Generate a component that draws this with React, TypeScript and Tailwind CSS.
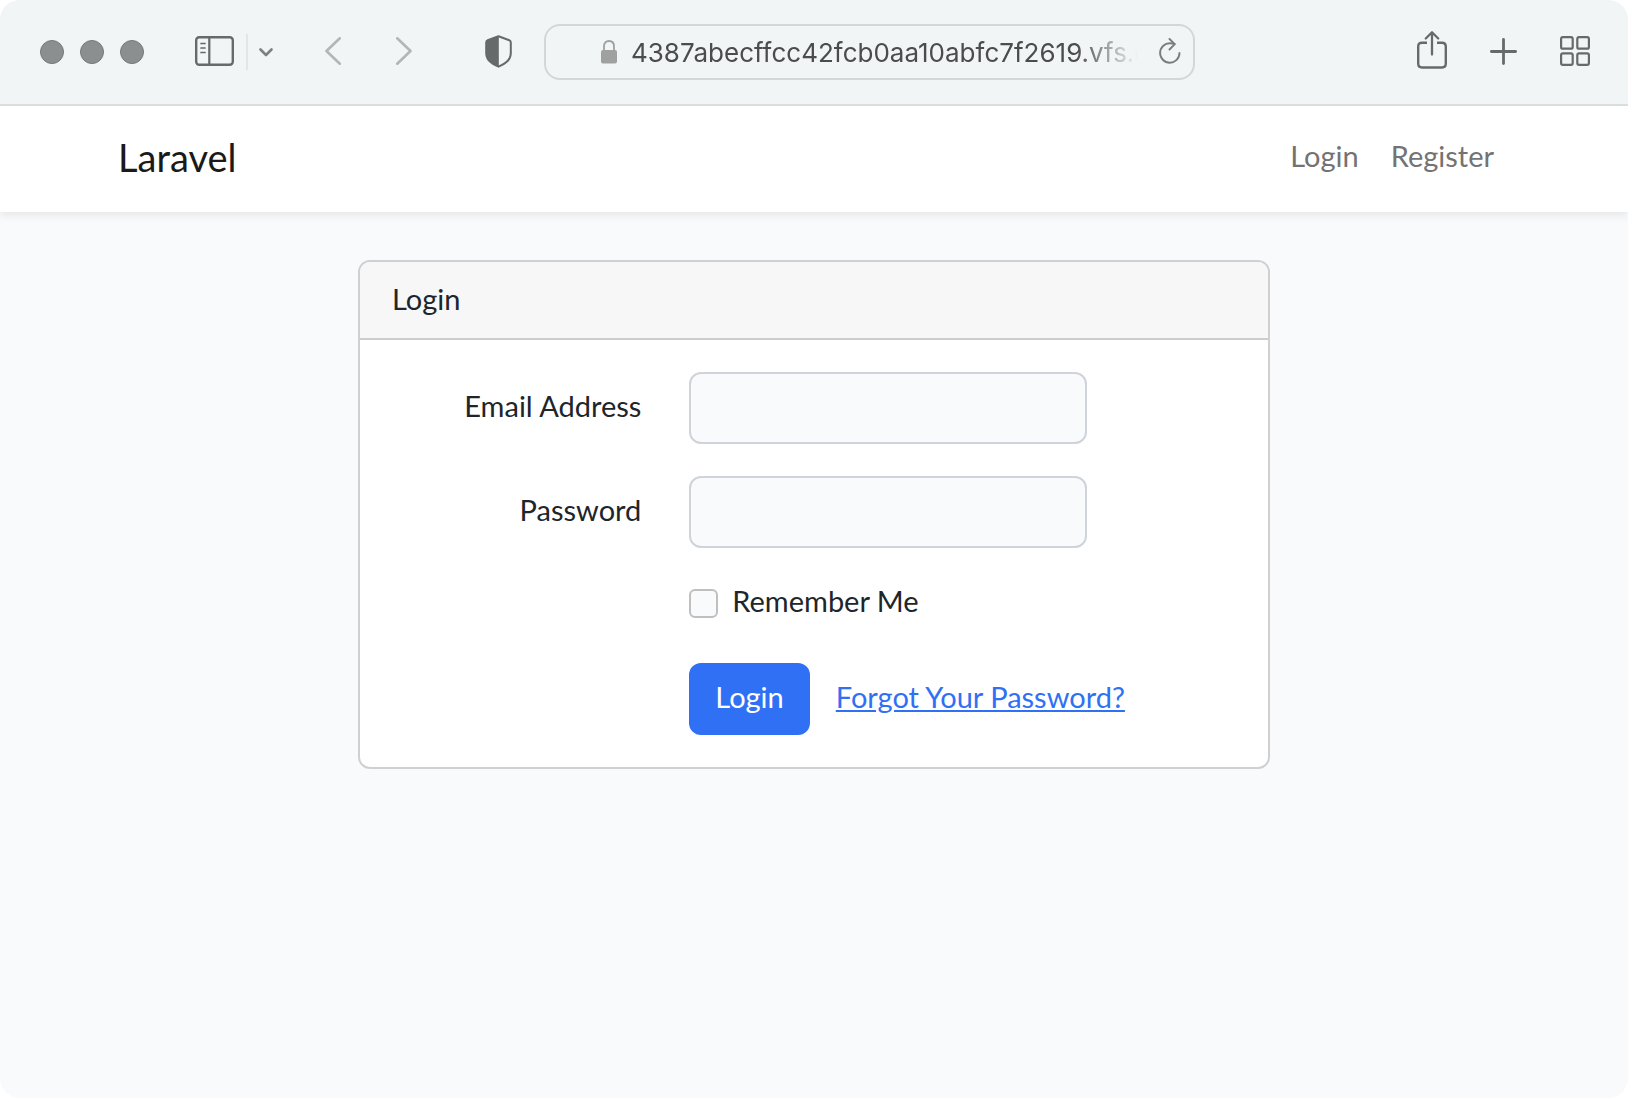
import React, { useState } from 'react';

function WindowDots() {
  return (
    <div className="flex shrink-0 gap-4">
      <span className="size-6 rounded-full border border-[#757979] bg-[#8b8f8f]" />
      <span className="size-6 rounded-full border border-[#757979] bg-[#8b8f8f]" />
      <span className="size-6 rounded-full border border-[#757979] bg-[#8b8f8f]" />
    </div>
  );
}

function AddressBar() {
  return (
    <div className="ml-8 flex h-14 w-[42%] items-center rounded-2xl border-2 border-[#d3d7d7] pl-[55px] pr-3">
      <svg width="16" height="24" viewBox="0 0 16 24" className="shrink-0" aria-hidden="true">
        <path d="M3 11V6.500C3 3 5 1 8 1s5 2 5 5.500V11" fill="none" stroke="#9fa1a1" strokeWidth="1.800" />
        <rect x="0" y="10" width="16" height="13.500" rx="2" fill="#9fa1a1" />
      </svg>
      <input
        type="text"
        aria-label="Address"
        defaultValue="4387abecffcc42fcb0aa10abfc7f2619.vfs.cloud"
        className="ml-[14px] min-w-0 flex-1 bg-transparent pt-[2px] font-['Inter',sans-serif] text-[26px] text-[#4c4c4c] outline-none [mask-image:linear-gradient(to_right,black_87%,transparent_99%)]"
      />
      <button type="button" aria-label="Reload" className="ml-4 shrink-0 pb-[2px]">
        <svg width="22" height="26" viewBox="0 0 22 26" fill="none" stroke="#7b7d7d" strokeWidth="1.900" strokeLinecap="round" strokeLinejoin="round">
          <path d="M20.500 15A9.700 9.700 0 1 1 11 5.300c1.700 0 3.200.2 4.500.8" />
          <path d="M10.500 1l5.300 5.100-5.300 5.400" />
        </svg>
      </button>
    </div>
  );
}

function Toolbar() {
  return (
    <header className="flex h-[106px] items-center border-b-2 border-[#dcdfdf] bg-[#f1f5f6] pl-10 pr-[38px]">
      <WindowDots />

      <button type="button" aria-label="Show sidebar" className="ml-[51px] shrink-0 pb-[2px]">
        <svg width="39" height="30" viewBox="0 0 39 30" fill="none" stroke="#666a6b" strokeLinecap="round">
          <rect x="1.200" y="1.200" width="36.600" height="27.600" rx="3" strokeWidth="2.400" />
          <path d="M14.300 1v28" strokeWidth="2.200" />
          <path d="M6 7.500h4M6 12h4M6 16.500h4" strokeWidth="1.700" />
        </svg>
      </button>
      <span className="ml-3 h-9 w-[2px] shrink-0 bg-[#e2e6e7]" />
      <button type="button" aria-label="Tab groups" className="ml-[11px] shrink-0">
        <svg width="14" height="9" viewBox="0 0 14 9" fill="none" stroke="#7c8081" strokeWidth="2.600" strokeLinecap="round" strokeLinejoin="round">
          <path d="M1.500 1.500L7 7l5.500-5.500" />
        </svg>
      </button>

      <button type="button" aria-label="Back" className="ml-[52px] shrink-0 pb-[2px]">
        <svg width="16" height="28" viewBox="0 0 16 28" fill="none" stroke="#b2b6b7" strokeWidth="2.600" strokeLinecap="round" strokeLinejoin="round">
          <path d="M14.800 1.300L1.500 14l13.300 12.700" />
        </svg>
      </button>
      <button type="button" aria-label="Forward" className="ml-[55px] shrink-0 pb-[2px]">
        <svg width="16" height="28" viewBox="0 0 16 28" fill="none" stroke="#b2b6b7" strokeWidth="2.600" strokeLinecap="round" strokeLinejoin="round">
          <path d="M1.200 1.300L14.500 14L1.200 26.700" />
        </svg>
      </button>

      <button type="button" aria-label="Privacy report" className="ml-[73px] shrink-0 pb-[2px]">
        <svg width="27" height="33" viewBox="0 0 27 33">
          <path
            d="M13.500 1.200L24.300 5.200q1.500.6 1.500 2.300V18c0 6-3.300 9.500-12.300 13.700C4.500 27.500 1.200 24 1.200 18V7.500q0-1.700 1.500-2.300z"
            fill="none"
            stroke="#666a6b"
            strokeWidth="2"
            strokeLinejoin="round"
          />
          <path d="M13.800 1L2.700 5.200Q1.200 5.800 1.200 7.500V18c0 6 3.300 9.500 12.600 13.700z" fill="#666a6b" />
        </svg>
      </button>

      <AddressBar />

      <div className="ml-auto flex shrink-0 items-center gap-[43px] pb-[2px]">
        <button type="button" aria-label="Share" className="pb-[2px]">
          <svg width="30" height="38" viewBox="0 0 30 38" fill="none" stroke="#666a6b" strokeWidth="2.400" strokeLinecap="round" strokeLinejoin="round">
            <path d="M10 11.700H5Q1.200 11.700 1.200 15.500V32.500Q1.200 36.500 5 36.500H25Q28.800 36.500 28.800 32.500V15.500Q28.800 11.700 25 11.700H20" strokeLinecap="butt" />
            <path d="M15 23.500V1.500M8.800 7.500L15 1.300l6.200 6.200" strokeWidth="2.300" />
          </svg>
        </button>
        <button type="button" aria-label="New tab">
          <svg width="27" height="27" viewBox="0 0 27 27" fill="none" stroke="#666a6b" strokeWidth="2.800" strokeLinecap="round">
            <path d="M13.500 1.400v24.200M1.400 13.500h24.200" />
          </svg>
        </button>
        <button type="button" aria-label="Tab overview">
          <svg width="30" height="30" viewBox="0 0 30 30" fill="none" stroke="#666a6b" strokeWidth="2.200">
            <rect x="1.100" y="1.100" width="11.600" height="11.600" rx="1.800" />
            <rect x="17.300" y="1.100" width="11.600" height="11.600" rx="1.800" />
            <rect x="1.100" y="17.300" width="11.600" height="11.600" rx="1.800" />
            <rect x="17.300" y="17.300" width="11.600" height="11.600" rx="1.800" />
          </svg>
        </button>
      </div>
    </header>
  );
}

function Navbar() {
  return (
    <nav className="bg-white shadow-[0_4px_8px_rgba(0,0,0,0.075)]">
      <div className="mx-auto flex h-[106px] max-w-[1440px] items-center justify-between px-6 pb-1">
        <a href="#" className="text-[38px] text-[#1a1a1a]">Laravel</a>
        <div className="flex gap-8 pb-[2px] pr-4">
          <a href="#login" className="text-[#737373]">Login</a>
          <a href="#register" className="text-[#737373]">Register</a>
        </div>
      </div>
    </nav>
  );
}

function LoginCard() {
  const [remember, setRemember] = useState(false);

  return (
    <section className="overflow-hidden rounded-xl border-2 border-[#cfd0d2] bg-white">
      <h1 className="border-b-2 border-[#cccccc] bg-[#f7f7f7] px-8 pb-4 pt-[14px]">Login</h1>

      <form className="p-8" onSubmit={(e) => e.preventDefault()}>
        <div className="grid grid-cols-12 gap-x-12">
          <label htmlFor="email" className="col-span-4 pt-[11px] text-right">Email Address</label>
          <input id="email" type="email" className="col-span-6 h-[72px] rounded-xl border-2 border-[#ced4da] bg-[#f8fafc] px-6" />
        </div>

        <div className="mt-8 grid grid-cols-12 gap-x-12">
          <label htmlFor="password" className="col-span-4 pt-[11px] text-right">Password</label>
          <input id="password" type="password" className="col-span-6 h-[72px] rounded-xl border-2 border-[#ced4da] bg-[#f8fafc] px-6" />
        </div>

        <div className="mt-[30px] grid grid-cols-12 gap-x-12">
          <div className="col-span-6 col-start-5 flex gap-[14px]">
            <input
              id="remember"
              type="checkbox"
              checked={remember}
              onChange={(e) => setRemember(e.target.checked)}
              className="mt-[11px] size-[29px] shrink-0 appearance-none rounded-md border-2 border-[#bfbfbf] bg-[#f8fafc] checked:border-[#3070f5] checked:bg-[#3070f5]"
            />
            <label htmlFor="remember">Remember Me</label>
          </div>
        </div>

        <div className="mt-[39px] grid grid-cols-12 gap-x-12">
          <div className="col-span-8 col-start-5 flex items-center">
            <button type="submit" className="h-[72px] rounded-xl bg-[#3070f5] px-[26px] pb-1 text-white">Login</button>
            <a href="#forgot" className="ml-[26px] pb-1 text-[#3070f5] underline">Forgot Your Password?</a>
          </div>
        </div>
      </form>
    </section>
  );
}

export default function App() {
  return (
    <div className="min-h-screen bg-white">
      <div className="min-h-screen overflow-hidden rounded-[20px] bg-[#f8fafc] font-['Lato','Noto_Sans',sans-serif] text-[29px] leading-[46px] text-[#212529]">
        <Toolbar />
        <Navbar />
        <main className="mx-auto max-w-[960px] px-6 py-12">
          <LoginCard />
        </main>
      </div>
    </div>
  );
}
